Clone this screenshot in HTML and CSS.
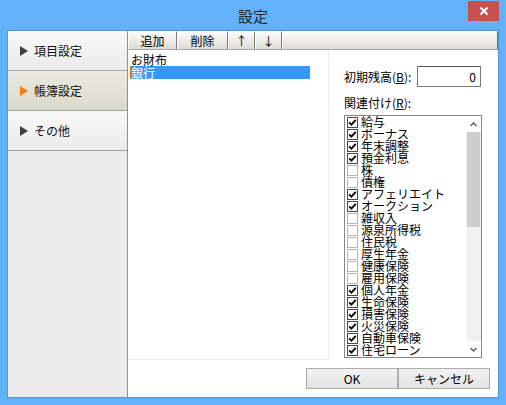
FILE: index.html
```html
<!DOCTYPE html>
<html lang="ja">
<head>
<meta charset="utf-8">
<title>設定</title>
<link rel="stylesheet" href="styles.css">
</head>
<body>
<div class="window">
  <div class="titlebar">
    <span class="title">設定</span>
    <div class="close"><svg width="10" height="10" viewBox="0 0 10 10"><path d="M1.5 1.5 L8.5 8.5 M8.5 1.5 L1.5 8.5" stroke="#fff" stroke-width="2.2"/></svg></div>
  </div>
  <div class="client">
    <nav class="nav">
      <div class="nav-item"><span class="tri"></span><span>項目設定</span></div>
      <div class="nav-item selected"><span class="tri"></span><span>帳簿設定</span></div>
      <div class="nav-item"><span class="tri"></span><span>その他</span></div>
    </nav>
    <div class="main">
      <div class="toolbar">
        <div class="tb-btn w-add">追加</div>
        <div class="tb-btn w-del">削除</div>
        <div class="tb-btn w-arr">↑</div>
        <div class="tb-btn w-arr">↓</div>
        <div class="tb-fill"></div>
      </div>
      <div class="body">
        <div class="listcol">
          <div class="list-item">お財布</div>
          <div class="list-item sel">銀行</div>
        </div>
        <div class="props">
          <div class="row">
            <span class="lbl">初期残高(<u>B</u>):</span>
            <div class="input">0</div>
          </div>
          <div class="lbl lbl2">関連付け(<u>R</u>):</div>
          <div class="checklist">
            <div class="items">
              <div class="ci"><span class="cb on"><svg viewBox="0 0 9 9"><path d="M1.2 4.3 L3.4 6.6 L7.8 1.8" fill="none" stroke="#000" stroke-width="1.8"/></svg></span><span class="ct">給与</span></div>
              <div class="ci"><span class="cb on"><svg viewBox="0 0 9 9"><path d="M1.2 4.3 L3.4 6.6 L7.8 1.8" fill="none" stroke="#000" stroke-width="1.8"/></svg></span><span class="ct">ボーナス</span></div>
              <div class="ci"><span class="cb on"><svg viewBox="0 0 9 9"><path d="M1.2 4.3 L3.4 6.6 L7.8 1.8" fill="none" stroke="#000" stroke-width="1.8"/></svg></span><span class="ct">年末調整</span></div>
              <div class="ci"><span class="cb on"><svg viewBox="0 0 9 9"><path d="M1.2 4.3 L3.4 6.6 L7.8 1.8" fill="none" stroke="#000" stroke-width="1.8"/></svg></span><span class="ct">預金利息</span></div>
              <div class="ci"><span class="cb"></span><span class="ct">株</span></div>
              <div class="ci"><span class="cb"></span><span class="ct">債権</span></div>
              <div class="ci"><span class="cb on"><svg viewBox="0 0 9 9"><path d="M1.2 4.3 L3.4 6.6 L7.8 1.8" fill="none" stroke="#000" stroke-width="1.8"/></svg></span><span class="ct">アフェリエイト</span></div>
              <div class="ci"><span class="cb on"><svg viewBox="0 0 9 9"><path d="M1.2 4.3 L3.4 6.6 L7.8 1.8" fill="none" stroke="#000" stroke-width="1.8"/></svg></span><span class="ct">オークション</span></div>
              <div class="ci"><span class="cb"></span><span class="ct">雑収入</span></div>
              <div class="ci"><span class="cb"></span><span class="ct">源泉所得税</span></div>
              <div class="ci"><span class="cb"></span><span class="ct">住民税</span></div>
              <div class="ci"><span class="cb"></span><span class="ct">厚生年金</span></div>
              <div class="ci"><span class="cb"></span><span class="ct">健康保険</span></div>
              <div class="ci"><span class="cb"></span><span class="ct">雇用保険</span></div>
              <div class="ci"><span class="cb on"><svg viewBox="0 0 9 9"><path d="M1.2 4.3 L3.4 6.6 L7.8 1.8" fill="none" stroke="#000" stroke-width="1.8"/></svg></span><span class="ct">個人年金</span></div>
              <div class="ci"><span class="cb on"><svg viewBox="0 0 9 9"><path d="M1.2 4.3 L3.4 6.6 L7.8 1.8" fill="none" stroke="#000" stroke-width="1.8"/></svg></span><span class="ct">生命保険</span></div>
              <div class="ci"><span class="cb on"><svg viewBox="0 0 9 9"><path d="M1.2 4.3 L3.4 6.6 L7.8 1.8" fill="none" stroke="#000" stroke-width="1.8"/></svg></span><span class="ct">損害保険</span></div>
              <div class="ci"><span class="cb on"><svg viewBox="0 0 9 9"><path d="M1.2 4.3 L3.4 6.6 L7.8 1.8" fill="none" stroke="#000" stroke-width="1.8"/></svg></span><span class="ct">火災保険</span></div>
              <div class="ci"><span class="cb on"><svg viewBox="0 0 9 9"><path d="M1.2 4.3 L3.4 6.6 L7.8 1.8" fill="none" stroke="#000" stroke-width="1.8"/></svg></span><span class="ct">自動車保険</span></div>
              <div class="ci"><span class="cb on"><svg viewBox="0 0 9 9"><path d="M1.2 4.3 L3.4 6.6 L7.8 1.8" fill="none" stroke="#000" stroke-width="1.8"/></svg></span><span class="ct">住宅ローン</span></div>
            </div>
            <div class="scrollbar">
              <div class="sb-arrow"><svg width="7" height="5" viewBox="0 0 7 5"><path d="M0.5 4 L3.5 1 L6.5 4" fill="none" stroke="#606060" stroke-width="1.5"/></svg></div>
              <div class="sb-thumb"></div>
              <div class="sb-track"></div>
              <div class="sb-arrow"><svg width="7" height="5" viewBox="0 0 7 5"><path d="M0.5 1 L3.5 4 L6.5 1" fill="none" stroke="#606060" stroke-width="1.5"/></svg></div>
            </div>
          </div>
        </div>
      </div>
      <div class="footer">
        <div class="btn">OK</div>
        <div class="btn">キャンセル</div>
      </div>
    </div>
  </div>
</div>
</body>
</html>
```

FILE: styles.css
```css
* { box-sizing: border-box; }
html, body { margin: 0; padding: 0; }
body {
  width: 506px;
  height: 405px;
  overflow: hidden;
  font-family: "Noto Sans CJK JP", "Noto Sans", sans-serif;
  font-size: 12px;
  color: #000;
}
.window {
  width: 506px;
  height: 405px;
  background: #63b2f8;
  padding: 0 7px 7px 7px;
  display: flex;
  flex-direction: column;
}
.titlebar {
  height: 30px;
  flex: none;
  margin: 0 -7px;
  display: flex;
  justify-content: center;
  align-items: center;
  position: relative;
}
.title {
  font-size: 15px;
  color: #1e2a36;
  line-height: 18px;
  margin-top: 1px;
}
.close {
  position: absolute;
  top: 1px;
  right: 7px;
  width: 31px;
  height: 20px;
  background: #c75050;
  display: flex;
  align-items: center;
  justify-content: center;
}
.close svg { display: block; }
.client {
  flex: 1;
  border: 1px solid #5197d8;
  background: #fff;
  display: flex;
  min-height: 0;
}
.nav {
  width: 120px;
  flex: none;
  background: #ebebeb;
  border-right: 1px solid #8f8f8f;
}
.nav-item {
  height: 40px;
  border-bottom: 1px solid #a3a3a3;
  background: linear-gradient(#f8f8f8, #ebebeb);
  display: flex;
  align-items: center;
  padding-left: 12px;
  gap: 6px;
  line-height: 14px;
  color: #111;
}
.nav-item.selected {
  background: linear-gradient(#eaeae2, #d9d9cb);
}
.tri {
  width: 0;
  height: 0;
  border-left: 8px solid #404040;
  border-top: 5px solid transparent;
  border-bottom: 5px solid transparent;
}
.nav-item.selected .tri { border-left-color: #f08010; }
.main {
  flex: 1;
  display: flex;
  flex-direction: column;
  min-width: 0;
}
.toolbar {
  height: 19px;
  flex: none;
  display: flex;
}
.tb-btn, .tb-fill {
  background: linear-gradient(#fbfbfa, #e9e8e4 60%, #dcdbd5);
  border-right: 1px solid #7a7a7a;
  border-bottom: 1px solid #a8a8a8;
  border-left: 1px solid #ffffff;
  border-top: 1px solid #ffffff;
  display: flex;
  align-items: center;
  justify-content: center;
  line-height: 14px;
}
.w-add { width: 49px; }
.w-del { width: 51px; }
.w-arr { width: 27px; }
.tb-fill { flex: 1; border-right-color: #6f6f6f; }
.body {
  height: 310px;
  flex: none;
  display: flex;
}
.listcol {
  width: 201px;
  flex: none;
  border-right: 1px solid #ededed;
  border-bottom: 1px solid #ededed;
  padding: 3px 18px 0 2px;
}
.list-item {
  height: 13px;
  line-height: 13px;
  padding-left: 1px;
}
.list-item.sel {
  background: #3399ff;
  color: #fff;
  border: 1px dotted #d08020;
  line-height: 11px;
  padding-left: 0;
}
.props {
  flex: 1;
  padding: 16px 0 0 15px;
  display: flex;
  flex-direction: column;
}
.row {
  width: 137px;
  height: 21px;
  display: flex;
  align-items: center;
  justify-content: space-between;
}
.lbl { line-height: 14px; white-space: nowrap; }
.lbl u { text-decoration: underline; }
.input {
  width: 64px;
  height: 21px;
  border: 1px solid #7a7a7a;
  border-top-color: #5c5c5c;
  text-align: right;
  padding-right: 4px;
  line-height: 19px;
}
.lbl2 { margin-top: 9px; }
.checklist {
  margin-top: 5px;
  width: 138px;
  height: 243px;
  border: 1px solid #828790;
  display: flex;
}
.items {
  flex: 1;
  padding-left: 2px;
}
.ci {
  height: 12px;
  display: flex;
  align-items: center;
  gap: 3px;
  white-space: nowrap;
}
.ct {
  display: block;
  height: 12px;
  line-height: 12px;
  font-size: 12px;
}
.cb {
  width: 11px;
  height: 11px;
  flex: none;
  border: 1px solid #b6b6b6;
  background: #fff;
  display: flex;
  align-items: center;
  justify-content: center;
}
.cb.on { border-color: #4a4a4a; }
.cb svg { width: 9px; height: 9px; display: block; }
.scrollbar {
  width: 15px;
  flex: none;
  display: flex;
  flex-direction: column;
  background: #f0f0f0;
}
.sb-arrow {
  height: 16px;
  display: flex;
  align-items: center;
  justify-content: center;
  background: #fff;
}
.sb-thumb {
  height: 95px;
  background: #cdcdcd;
  margin: 0 1px;
}
.sb-track { flex: 1; }
.footer {
  flex: 1;
  display: flex;
  justify-content: flex-end;
  align-items: flex-start;
  padding: 8px 8px 0 0;
}
.btn {
  width: 92px;
  height: 21px;
  border: 1px solid #acacac;
  background: linear-gradient(#f2f2f2, #e3e3e3);
  display: flex;
  align-items: center;
  justify-content: center;
  line-height: 14px;
}
```
